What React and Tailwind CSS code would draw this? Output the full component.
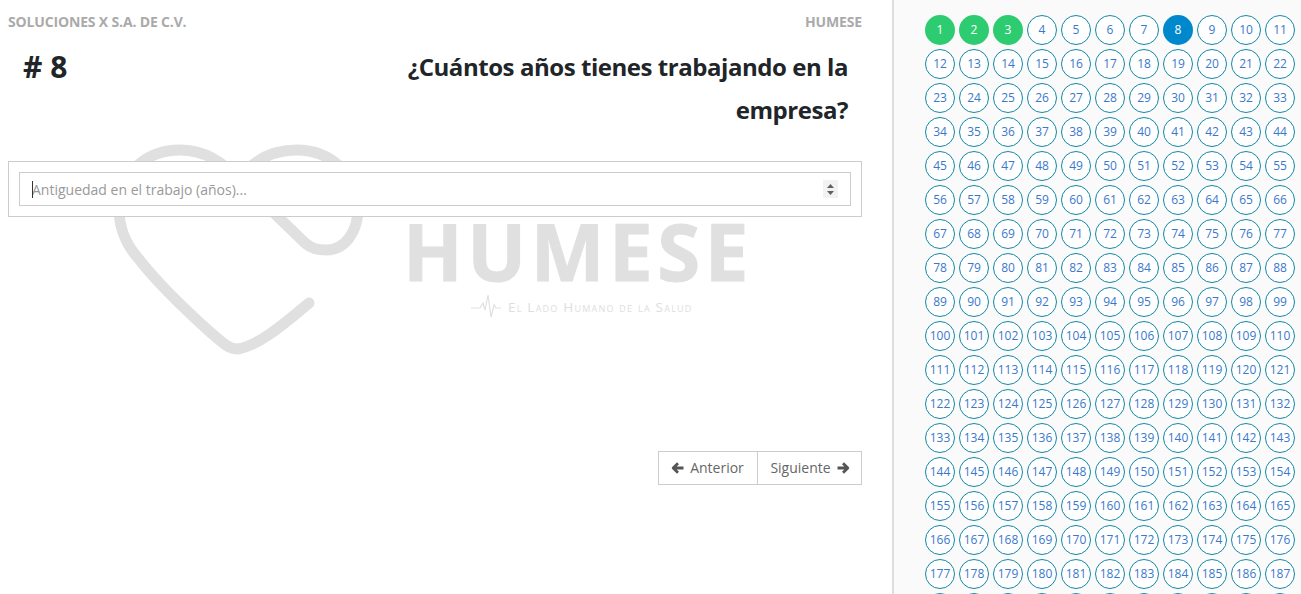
import React from "react";

const nums = Array.from({ length: 198 }, (_, i) => i + 1);

function Watermark() {
  return (
    <div className="absolute left-0 top-0 w-[892px] h-[400px] pointer-events-none">
      <svg className="absolute left-0 top-0" width="892" height="400" viewBox="0 0 892 400" fill="none">
        <path
          d="M309 303 C 285 323, 260 345, 238 349 C 228 349, 222 342 210 332 C 180 305 155 280 138 258 C 125 243 119 228 119 208 C 119 172 148 150 180 150 C 205 150 222 162 240 180 L 305 243 C 312 249 318 250 326 250 C 345 250 358 232 358 208 C 358 175 330 150 297 150 C 275 150 258 158 245 172"
          stroke="#e0e0e0"
          strokeWidth="11"
          strokeLinecap="round"
        />
        <path d="M471 308 H480 L483 303 L485 310 L488 295 L491 317 L494 305 L496 308 H501" stroke="#e0e0e0" strokeWidth="1.2" />
      </svg>
      <div className="absolute left-[403px] top-[207px] text-[78px] leading-[89px] font-bold tracking-[4.6px] text-[#e0e0e0] [-webkit-text-stroke:1px_#e0e0e0] font-['Open_Sans',sans-serif]">
        HUMESE
      </div>
      <div className="absolute left-[508px] top-[298px] text-[13.5px] leading-[18px] tracking-[1.22px] text-[#dedede] [font-variant:small-caps] font-['Open_Sans',sans-serif]">
        El Lado Humano de la Salud
      </div>
    </div>
  );
}

function ArrowIcon({ flip }) {
  return (
    <svg width="13" height="12" viewBox="0 0 13 12" fill="none" className={flip ? "-scale-x-100" : ""}>
      <path d="M7 1.2 L2.2 6 L7 10.8 M2.6 6 H12.5" stroke="#555555" strokeWidth="2.8" strokeLinejoin="round" />
    </svg>
  );
}

export default function App() {
  return (
    <div className="relative flex h-[594px] w-[1301px] overflow-hidden bg-white font-['Open_Sans',sans-serif]">
      <Watermark />
      <main className="relative w-[892px] shrink-0 px-2 pt-[13px]">
        <header className="flex justify-between pr-[22px] text-[14px] leading-[18px] font-bold text-[#aaaaaa]">
          <span className="tracking-[-0.16px]">SOLUCIONES X S.A. DE C.V.</span>
          <span className="tracking-[-0.16px]">HUMESE</span>
        </header>
        <section className="flex items-start justify-between pl-[15px] pr-[36px] pt-[14px] text-[#212529]">
          <h1 className="text-[30px] leading-[43px] font-bold">#&nbsp;8</h1>
          <h2 className="w-[460px] text-right text-[24px] leading-[43px] font-bold tracking-[-0.45px]">
            ¿Cuántos años tienes trabajando en la empresa?
          </h2>
        </section>
        <div className="mt-[30px] mr-[22px] border border-[#cccccc] bg-white p-[10px]">
          <div className="relative">
            <input
              type="text"
              placeholder="Antiguedad en el trabajo (años)..."
              className="block h-[34px] w-full border border-[#cccccc] bg-white px-3 text-[14px] text-[#555555] outline-none placeholder:text-[#999999]"
            />
            <span className="absolute left-[13px] top-[9px] h-[17px] w-px bg-[#333333]" />
            <span className="absolute right-[13px] top-[8px] flex h-[18px] w-[15px] flex-col items-center justify-center gap-[3px] bg-[#f2f2f2]">
              <svg width="7" height="4" viewBox="0 0 7 4"><path d="M3.5 0 L7 4 H0 Z" fill="#606060" /></svg>
              <svg width="7" height="4" viewBox="0 0 7 4"><path d="M0 0 H7 L3.5 4 Z" fill="#606060" /></svg>
            </span>
          </div>
        </div>
        <div className="mt-[234px] mr-[22px] flex justify-end text-[14px] leading-[18px] text-[#666666]">
          <button className="flex h-[34px] w-[100px] items-center justify-center gap-[6px] border border-[#cccccc] bg-white pr-px pb-px">
            <ArrowIcon />
            Anterior
          </button>
          <button className="-ml-px flex h-[34px] w-[105px] items-center justify-center gap-[6px] border border-[#cccccc] bg-white pl-px pb-px">
            Siguiente
            <ArrowIcon flip />
          </button>
        </div>
      </main>
      <aside className="relative min-w-0 flex-1 border-l-2 border-[#dddddd] bg-[#fafafa] pl-[31px] pt-[15px]">
        <div className="grid grid-cols-[repeat(11,30px)] auto-rows-[30px] gap-[4px]">
          {nums.map((n) => {
            const green = n <= 3;
            const current = n === 8;
            return (
              <div
                key={n}
                className={
                  green
                    ? "flex items-center justify-center rounded-full bg-[#2ecc71] text-[12px] text-white"
                    : current
                    ? "flex items-center justify-center rounded-full bg-[#0088cc] text-[12px] text-white"
                    : "flex items-center justify-center rounded-full border border-[#1089a8] bg-white text-[12px] text-[#3a78cc]"
                }
              >
                {n}
              </div>
            );
          })}
        </div>
      </aside>
    </div>
  );
}
